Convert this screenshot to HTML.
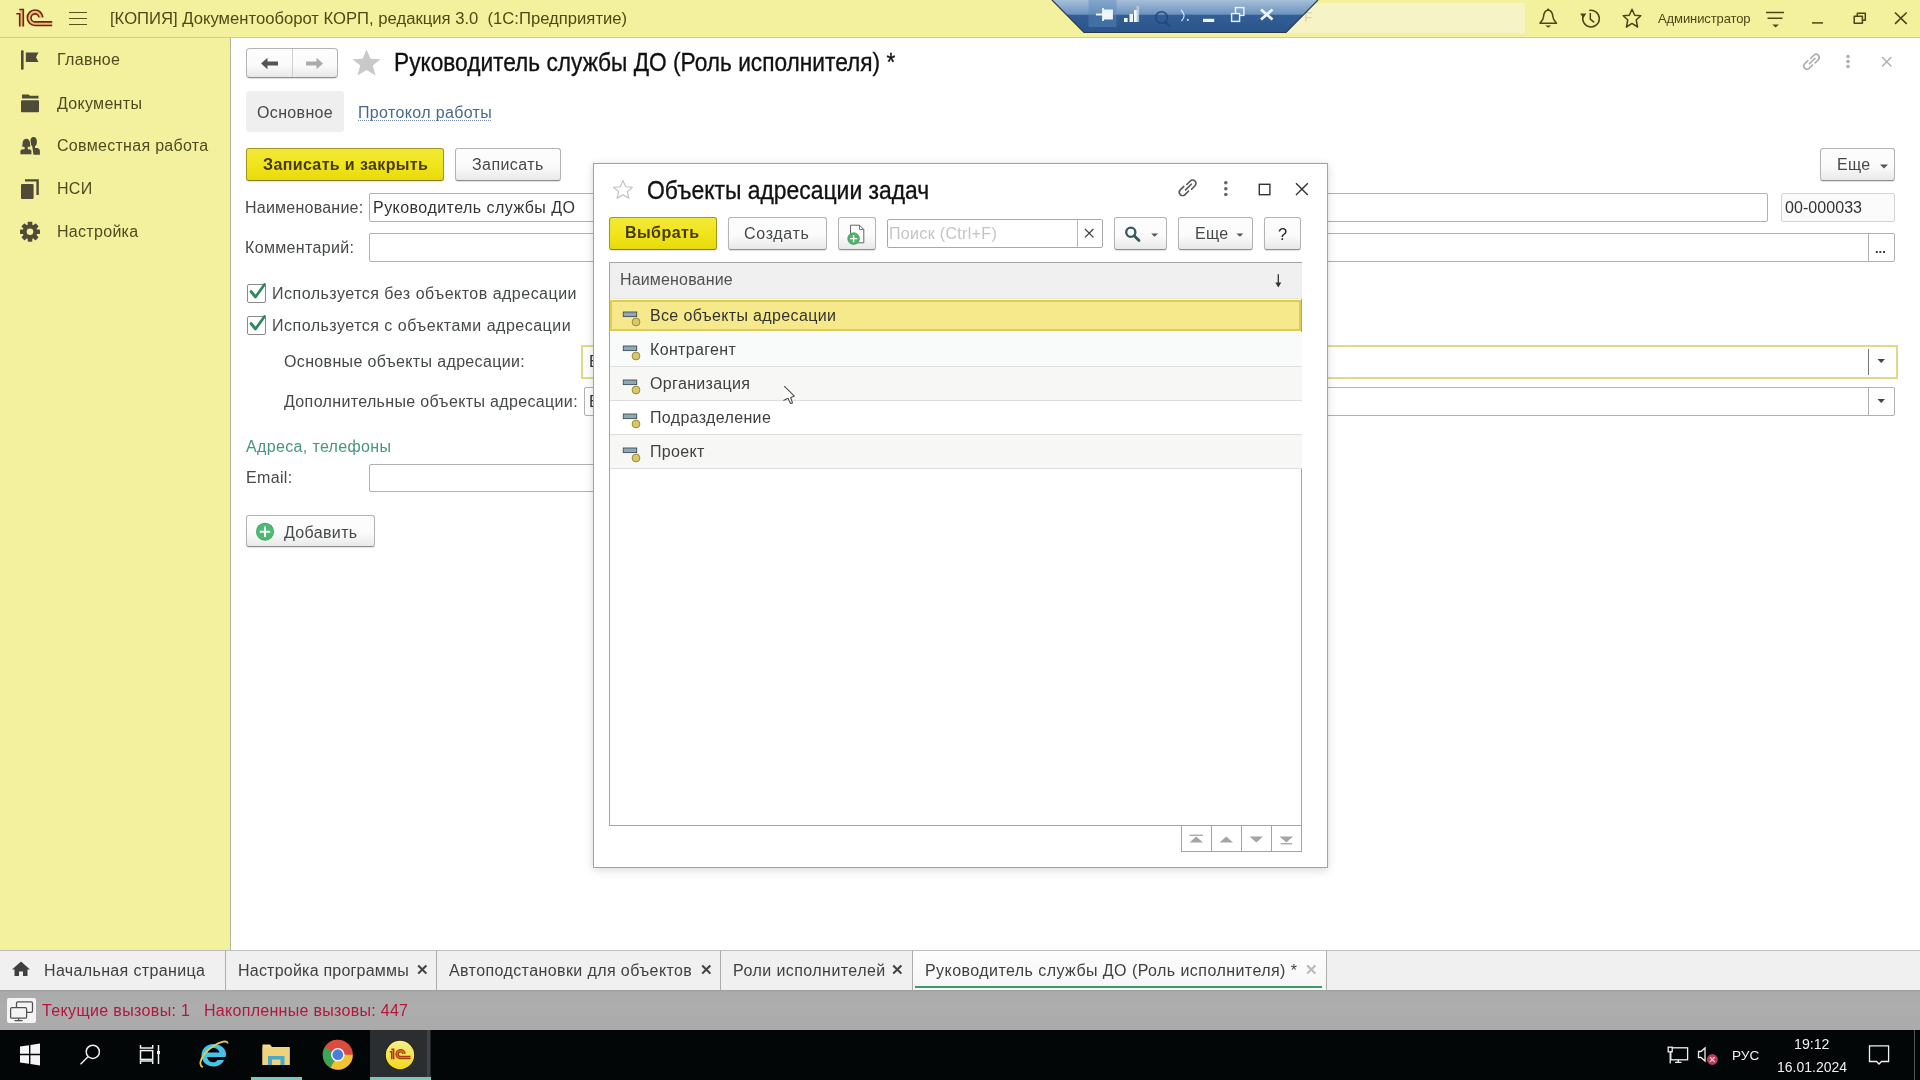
<!DOCTYPE html>
<html><head><meta charset="utf-8">
<style>
*{box-sizing:border-box}
html,body{margin:0;padding:0;width:1920px;height:1080px;overflow:hidden;background:#fff;font-family:"Liberation Sans",sans-serif;position:relative}
.a{position:absolute;white-space:nowrap;line-height:1;will-change:transform}
.b{position:absolute}
svg{position:absolute;overflow:visible}
#titlebar{position:absolute;left:0;top:0;width:1920px;height:38px;background:#f3f09e;border-bottom:1px solid #d3cd7e}
#side{position:absolute;left:0;top:38px;width:231px;height:912px;background:#f3f09e;border-right:1px solid #b4b29c}
.side-t{font-size:16px;color:#4e4b20;letter-spacing:0.3px}
.ft{font-size:16px;color:#464949;letter-spacing:0.35px;margin-top:1px}
.btn{position:absolute;border:1px solid #b4b4b4;border-bottom-color:#8e8e8e;border-radius:3px;background:linear-gradient(#fdfdfd,#fbfbfb 55%,#e9e9e9);box-shadow:0 1px 1px rgba(0,0,0,0.12)}
.ybtn{position:absolute;border:1px solid #a39620;border-bottom-color:#8c7f12;border-radius:3px;background:linear-gradient(#f2e838,#f1e51c 50%,#e7da0c);box-shadow:0 1px 1px rgba(0,0,0,0.12)}
.inp{position:absolute;border:1px solid #b0b0b0;border-radius:2px;background:#fff}
#tabs{position:absolute;left:0;top:950px;width:1920px;height:40px;background:#f0f0f0;border-top:1px solid #bdbdbd}
#status{position:absolute;left:0;top:990px;width:1920px;height:40px;background:linear-gradient(#9e9e9e,#aaaaaa 2px,#adadad 40%,#aaaaaa)}
#task{position:absolute;left:0;top:1030px;width:1920px;height:50px;background:#030606}
.tab-t{font-size:16px;color:#404040;letter-spacing:0.22px}
.st-t{font-size:16px;color:#b5163a;letter-spacing:0.36px}
</style></head><body>

<!-- TITLE BAR -->
<div id="titlebar"></div>
<!-- 1C logo -->
<svg style="left:0;top:0" width="60" height="32" viewBox="0 0 60 32">
  <rect x="19.7" y="9.5" width="3.6" height="17.1" fill="#f4b487"/>
  <path d="M27.25 17.75 A7.75 7.75 0 0 1 42.75 17.75 L39 17.75 A4 4 0 0 0 31 17.75 A4 4 0 0 0 35 21.9 H52.2 V25.5 H35 A7.75 7.75 0 0 1 27.25 17.75 Z" fill="#f4b487"/>
  <path d="M16.3 13.8 H19.7 V26.6 M19.3 9.5 H23.3 V26.6" fill="none" stroke="#6b2a06" stroke-width="1.6"/>
  <path d="M42.8 17.4 A7.75 7.75 0 1 0 35 25.5 H52.2" fill="none" stroke="#6b2a06" stroke-width="1.6"/>
  <path d="M39 17.4 A4 4 0 1 0 35 21.9 H52.2" fill="none" stroke="#6b2a06" stroke-width="1.6"/>
</svg>
<!-- hamburger -->
<div class="b" style="left:69px;top:11.7px;width:18px;height:1.6px;background:#57531c"></div>
<div class="b" style="left:69px;top:17.6px;width:18px;height:1.6px;background:#57531c"></div>
<div class="b" style="left:69px;top:23.6px;width:18px;height:1.6px;background:#57531c"></div>
<div class="a" style="left:110px;top:10.8px;font-size:16.65px;color:#4f4b16">[КОПИЯ] Документооборот КОРП, редакция 3.0&nbsp; (1С:Предприятие)</div>

<!-- search field behind remote toolbar -->
<div class="b" style="left:1280px;top:3px;width:245px;height:30px;background:#f6f3c6"></div>
<div class="a" style="left:1304px;top:10px;font-size:14px;color:#d8d4b0">F</div>
<!-- remote desktop toolbar -->
<svg style="left:0;top:0" width="1920" height="40" viewBox="0 0 1920 40">
  <defs>
    <linearGradient id="rdg" x1="0" y1="0" x2="0" y2="1">
      <stop offset="0" stop-color="#a6bfd8"/>
      <stop offset="0.44" stop-color="#6d93bf"/>
      <stop offset="0.46" stop-color="#325f95"/>
      <stop offset="1" stop-color="#2a548b"/>
    </linearGradient>
  </defs>
  <path d="M1052 0 L1084 32.5 L1286 32.5 L1318 0 Z" fill="url(#rdg)"/>
  <path d="M1052 0 L1084 32.5 L1286 32.5 L1318 0" fill="none" stroke="#2b3a4a" stroke-width="1.2"/>
  <rect x="1088.5" y="0" width="28" height="27" fill="#5a8abb" opacity="0.45"/>
  <!-- pin -->
  <path d="M1096 14.5 H1103 M1103 8 V21 M1104 10.5 H1112 V18.5 H1104 Z" fill="#eef6fb" stroke="#eef6fb" stroke-width="1.8"/>
  <!-- signal -->
  <rect x="1124" y="18" width="3.6" height="4" fill="#f2f7fa"/>
  <rect x="1129.5" y="14" width="3.6" height="8" fill="#f2f7fa"/>
  <rect x="1134" y="10" width="3.6" height="12" fill="#f2f7fa"/>
  <rect x="1136.5" y="6" width="2.6" height="16" fill="#c0d2e2" opacity="0.8"/>
  <!-- magnifier -->
  <circle cx="1161.5" cy="17.5" r="5.8" fill="none" stroke="#1f4a7e" stroke-width="1.5"/>
  <path d="M1165.5 22 L1170 26.5" stroke="#1f4a7e" stroke-width="2.2"/>
  <!-- ). -->
  <path d="M1181 10 Q1187 15.5 1181.5 21" fill="none" stroke="#e6eef5" stroke-width="1.1"/>
  <rect x="1187" y="19" width="1.6" height="1.8" fill="#e6eef5"/>
  <!-- minimize -->
  <rect x="1203" y="18.8" width="11.2" height="3.2" fill="#eef6fb"/>
  <!-- restore -->
  <rect x="1235.5" y="7.6" width="8.4" height="7.8" fill="none" stroke="#eef6fb" stroke-width="1.4"/>
  <rect x="1231.6" y="13.6" width="8" height="7.8" fill="#3a6aa0" stroke="#eef6fb" stroke-width="1.4"/>
  <!-- close -->
  <path d="M1261 9.5 L1272.5 19.5 M1272.5 9.5 L1261 19.5" stroke="#eef6fb" stroke-width="2.8"/>
</svg>
<!-- right title icons -->
<svg style="left:0;top:0" width="1920" height="40" viewBox="0 0 1920 40">
  <g fill="none" stroke="#4a4618" stroke-width="1.5" stroke-linejoin="round">
    <path d="M1548.2 10 C1544 10.5 1543.8 14 1543.5 17 C1543.2 20 1541 22 1540 23.2 H1556.5 C1555.5 22 1553.2 20 1552.9 17 C1552.6 14 1552.4 10.5 1548.2 10 Z"/>
    <path d="M1589.3 10.5 A8.3 8.3 0 1 1 1583.3 15.6"/>
    <path d="M1590.3 13 V19.2 L1594.2 22.3"/>
    <path d="M1632 9.3 L1634.7 15.3 L1640.8 15.8 L1636.2 20 L1637.6 27 L1632 23.4 L1626.4 27 L1627.8 20 L1623.2 15.8 L1629.3 15.3 Z"/>
    <path d="M1766 12.4 H1784 M1767.5 18.3 H1782.5"/>
    <path d="M1812 22.9 H1823"/>
    <rect x="1854.2" y="16.3" width="8.2" height="7"/>
    <path d="M1857.3 16.3 V13.3 H1865.3 V20.3 H1862.4"/>
    <path d="M1895 12.5 L1906.7 23.8 M1906.7 12.5 L1895 23.8" stroke-width="1.6"/>
  </g>
  <path d="M1545.3 25.4 H1551.2 L1548.2 27.8 Z" fill="#4a4618"/>
  <circle cx="1548.2" cy="9.6" r="1.1" fill="#4a4618"/>
  <path d="M1580.2 13.4 L1586.4 13.6 L1583.2 18.2 Z" fill="#4a4618"/>
  <path d="M1772.3 24.4 H1778.9 L1775.6 27.6 Z" fill="#4a4618"/>
</svg>
<div class="a" style="left:1657.8px;top:12px;font-size:13px;color:#4a4618;letter-spacing:-0.1px">Администратор</div>

<!-- SIDEBAR -->
<div id="side"></div>
<svg style="left:0;top:0" width="60" height="260" viewBox="0 0 60 260">
  <g fill="#504a38">
    <rect x="21" y="50.3" width="2.6" height="19.5" rx="1"/>
    <path d="M25.8 52.6 H38.5 L36 57.3 L38.5 62 H25.8 Z"/>
    <path d="M22 94.4 H28.5 L30 95.8 H38.5 V98.5 H22 Z"/>
    <rect x="21" y="100.2" width="18" height="12" rx="1"/>
    <!-- people -->
    <ellipse cx="33.6" cy="141.8" rx="3.3" ry="4.8"/>
    <path d="M32 145 H35 V148 H37.4 Q39.9 148.4 39.9 151 V154.8 H33.5 Z"/>
    <path d="M21.8 147.2 C22 143 22.2 138.4 26.3 138.4 C30.4 138.4 30.6 143 30.8 147.2 H28.2 V148.9 H29.6 Q31.9 148.9 31.9 151.2 V154.8 H20 V151.2 Q20 148.9 22.4 148.9 H24.2 V147.2 Z" stroke="#f3f09e" stroke-width="0.9"/>
    <!-- pages -->
    <path d="M25 179.2 H38.8 V195 H36.4 V181.6 H25 Z"/>
    <rect x="21" y="184" width="12.6" height="15" rx="1"/>
  </g>
  <!-- gear -->
  <g transform="translate(30 231.8)">
    <g fill="#504a38">
      <rect x="-2.3" y="-10" width="4.6" height="20" rx="0.8"/>
      <rect x="-2.3" y="-10" width="4.6" height="20" rx="0.8" transform="rotate(45)"/>
      <rect x="-2.3" y="-10" width="4.6" height="20" rx="0.8" transform="rotate(90)"/>
      <rect x="-2.3" y="-10" width="4.6" height="20" rx="0.8" transform="rotate(135)"/>
      <circle r="7.3"/>
    </g>
    <circle r="3.3" fill="#f3f09e"/>
  </g>
</svg>
<div class="a side-t" style="left:57px;top:52.3px">Главное</div>
<div class="a side-t" style="left:57px;top:95.5px">Документы</div>
<div class="a side-t" style="left:57px;top:138px">Совместная работа</div>
<div class="a side-t" style="left:57px;top:181.3px">НСИ</div>
<div class="a side-t" style="left:57px;top:223.7px">Настройка</div>

<!-- MAIN FORM -->
<div class="btn" style="left:246px;top:48px;width:92px;height:30px;border-radius:4px"></div>
<div class="b" style="left:292px;top:49px;width:1px;height:28px;background:#d0d0d0"></div>
<svg style="left:0;top:0" width="400" height="90" viewBox="0 0 400 90">
  <path d="M261 63.5 L267.5 57.7 V61.5 H278 V65.5 H267.5 V69.3 Z" fill="#555"/>
  <path d="M323 63.5 L316.5 57.7 V61.5 H306 V65.5 H316.5 V69.3 Z" fill="#aaa"/>
  <path d="M366.5 49.5 L370.5 58.8 L380.5 59.3 L372.8 65.6 L375.5 75.6 L366.5 70 L357.5 75.6 L360.2 65.6 L352.5 59.3 L362.5 58.8 Z" fill="#c9c9c9"/>
</svg>
<div class="a" style="left:393.5px;top:52.3px;font-size:22.7px;color:#111;-webkit-text-stroke:0.3px #111;transform:scaleY(1.115);transform-origin:0 19.26px">Руководитель службы ДО (Роль исполнителя) *</div>
<svg style="left:0;top:0" width="1920" height="90" viewBox="0 0 1920 90">
  <g fill="none" stroke="#aaa" stroke-width="1.6" stroke-linecap="round">
    <path d="M1810.5 58.5 L1814 55 A3.2 3.2 0 0 1 1818.5 59.5 L1815 63"/>
    <path d="M1812.5 65 L1809 68.5 A3.2 3.2 0 0 1 1804.5 64 L1808 60.5"/>
    <path d="M1809.5 63.8 L1815 58.3"/>
    <path d="M1882.5 57.5 L1891 66 M1891 57.5 L1882.5 66" stroke-width="1.3"/>
  </g>
  <g fill="#aaa"><circle cx="1848" cy="56.5" r="1.7"/><circle cx="1848" cy="61.5" r="1.7"/><circle cx="1848" cy="66.5" r="1.7"/></g>
</svg>
<div class="b" style="left:246px;top:91px;width:98px;height:41px;background:#efefef;border-radius:3px"></div>
<div class="a ft" style="left:257.3px;top:104.2px">Основное</div>
<div class="a ft" style="left:358px;top:104.2px;color:#48698c">Протокол работы</div>
<div class="b" style="left:358px;top:120px;width:133px;height:0;border-top:1px dotted #6f8aa8"></div>

<div class="ybtn" style="left:246px;top:148px;width:198px;height:32.5px"></div>
<div class="a ft" style="left:263px;top:155.9px;font-weight:bold;color:#463a08;letter-spacing:0.37px">Записать и закрыть</div>
<div class="btn" style="left:455px;top:148px;width:106px;height:32.5px"></div>
<div class="a ft" style="left:472.4px;top:155.5px;letter-spacing:0.42px">Записать</div>
<div class="btn" style="left:1820px;top:148px;width:75px;height:32.5px"></div>
<div class="a ft" style="left:1837.3px;top:156px">Еще</div>
<svg style="left:0;top:0" width="1920" height="420" viewBox="0 0 1920 420">
  <path d="M1880 164.5 H1888 L1884 168.5 Z" fill="#555"/>
</svg>

<div class="a ft" style="left:245px;top:198.5px;letter-spacing:0.23px">Наименование:</div>
<div class="inp" style="left:369px;top:193px;width:1399px;height:29px"></div>
<div class="a ft" style="left:373px;top:198.5px;color:#333;letter-spacing:0.46px">Руководитель службы ДО</div>
<div class="inp" style="left:1781px;top:193px;width:114px;height:29px;background:#fbfbfb;border-color:#d4d4d4"></div>
<div class="a ft" style="left:1785px;top:199px;color:#333;letter-spacing:0.06px">00-000033</div>

<div class="a ft" style="left:245px;top:239px">Комментарий:</div>
<div class="inp" style="left:369px;top:233px;width:1526px;height:29px"></div>
<div class="b" style="left:1868px;top:234px;width:1px;height:27px;background:#b0b0b0"></div>
<div class="a" style="left:1875px;top:242.2px;font-size:13px;color:#333;font-weight:bold">...</div>

<!-- checkboxes -->
<div class="inp" style="left:247px;top:284px;width:19px;height:19px;border-color:#8a8a8a;border-radius:2px"></div>
<div class="inp" style="left:247px;top:316px;width:19px;height:19px;border-color:#8a8a8a;border-radius:2px"></div>
<svg style="left:0;top:0" width="300" height="360" viewBox="0 0 300 360">
  <path d="M251 291.5 L255.5 297 L264.5 284.5" fill="none" stroke="#2e8a5c" stroke-width="2.8" stroke-linecap="round" stroke-linejoin="round"/>
  <path d="M251 323.5 L255.5 329 L264.5 316.5" fill="none" stroke="#2e8a5c" stroke-width="2.8" stroke-linecap="round" stroke-linejoin="round"/>
</svg>
<div class="a ft" style="left:272px;top:285.2px;letter-spacing:0.49px">Используется без объектов адресации</div>
<div class="a ft" style="left:272px;top:317.2px;letter-spacing:0.49px">Используется с объектами адресации</div>

<div class="a ft" style="left:284px;top:353.3px">Основные объекты адресации:</div>
<div class="b" style="left:581px;top:344.5px;width:1316.5px;height:34px;border:2px solid #dedb88;background:#fff"></div>
<div class="a ft" style="left:588.5px;top:353.3px;color:#333">В</div>
<div class="b" style="left:1868px;top:349px;width:1px;height:26px;background:#777"></div>
<div class="a ft" style="left:284px;top:393.1px">Дополнительные объекты адресации:</div>
<div class="inp" style="left:584px;top:387px;width:1311px;height:29px"></div>
<div class="a ft" style="left:588.5px;top:393.1px;color:#333">В</div>
<div class="b" style="left:1868px;top:388px;width:1px;height:27px;background:#b0b0b0"></div>
<svg style="left:0;top:0" width="1920" height="420" viewBox="0 0 1920 420">
  <path d="M1877.5 359 H1885 L1881.25 363 Z" fill="#444"/>
  <path d="M1877.5 399 H1885 L1881.25 403 Z" fill="#444"/>
</svg>

<div class="a ft" style="left:246px;top:438px;color:#46967a">Адреса, телефоны</div>
<div class="a ft" style="left:246.2px;top:468.8px">Email:</div>
<div class="inp" style="left:369px;top:463.5px;width:800px;height:28px"></div>

<div class="btn" style="left:245.8px;top:514.8px;width:129px;height:32.5px"></div>
<svg style="left:0;top:0" width="400" height="560" viewBox="0 0 400 560">
  <circle cx="265" cy="531.7" r="9" fill="#3aa560"/>
  <circle cx="265" cy="531.7" r="8.2" fill="#4cbb72"/>
  <path d="M265 526.5 V536.9 M259.8 531.7 H270.2" stroke="#fff" stroke-width="2"/>
</svg>
<div class="a ft" style="left:284px;top:524.3px">Добавить</div>

<!-- DIALOG -->
<div class="b" style="left:593px;top:163px;width:735px;height:705px;background:#fff;border:1px solid #a3a3a3;box-shadow:0 2px 9px rgba(0,0,0,0.15),0 0 3px rgba(0,0,0,0.06)"></div>
<svg style="left:0;top:0" width="1920" height="900" viewBox="0 0 1920 900">
  <path d="M623 180.6 L625.7 186.8 L632.4 187.3 L627.3 191.6 L628.9 198.3 L623 194.7 L617.1 198.3 L618.7 191.6 L613.6 187.3 L620.3 186.8 Z" fill="none" stroke="#bdbdbd" stroke-width="1.1" stroke-linejoin="round"/>
  <g fill="none" stroke="#555" stroke-width="1.6" stroke-linecap="round">
    <path d="M1186.8 184.5 L1190.3 181 A3.3 3.3 0 0 1 1195 185.7 L1191.5 189.2"/>
    <path d="M1188.6 191 L1185 194.6 A3.3 3.3 0 0 1 1180.3 189.9 L1183.8 186.4"/>
    <path d="M1185.6 189.9 L1191.3 184.2"/>
  </g>
  <g fill="#666"><circle cx="1225.8" cy="182.8" r="1.8"/><circle cx="1225.8" cy="188.8" r="1.8"/><circle cx="1225.8" cy="194.5" r="1.8"/></g>
  <rect x="1259.3" y="184.3" width="10.6" height="10.4" fill="none" stroke="#333" stroke-width="1.4"/>
  <path d="M1296 183.3 L1307.8 195 M1307.8 183.3 L1296 195" stroke="#333" stroke-width="1.4"/>
</svg>
<div class="a" style="left:646.8px;top:180px;font-size:22.9px;color:#111;-webkit-text-stroke:0.3px #111;transform:scaleY(1.12);transform-origin:0 19.38px">Объекты адресации задач</div>

<div class="ybtn" style="left:609px;top:217px;width:108px;height:33px"></div>
<div class="a ft" style="left:625px;top:224.3px;font-weight:bold;color:#463a08;letter-spacing:0.45px">Выбрать</div>
<div class="btn" style="left:728px;top:217px;width:98.5px;height:32.5px"></div>
<div class="a ft" style="left:744px;top:225.2px;letter-spacing:0.68px">Создать</div>
<div class="btn" style="left:838px;top:217px;width:37.5px;height:32.5px"></div>
<svg style="left:0;top:0" width="1920" height="300" viewBox="0 0 1920 300">
  <path d="M850.5 225.2 H859.5 L863.8 229.5 V242.8 H850.5 Z" fill="#fff" stroke="#666" stroke-width="1"/>
  <path d="M859.5 225.2 V229.5 H863.8" fill="none" stroke="#666" stroke-width="0.9"/>
  <circle cx="853.6" cy="238.6" r="5.8" fill="#52b46c" stroke="#3a9a58" stroke-width="0.8"/>
  <path d="M853.6 235 V242.2 M850 238.6 H857.2" stroke="#fff" stroke-width="1.4"/>
</svg>
<div class="inp" style="left:887px;top:219px;width:216px;height:28.5px;border-color:#a8a8a8"></div>
<div class="b" style="left:1076.5px;top:220px;width:1px;height:26.5px;background:#b8b8b8"></div>
<div class="a ft" style="left:889.3px;top:225.2px;color:#c4c4c4;letter-spacing:0.33px">Поиск (Ctrl+F)</div>
<svg style="left:0;top:0" width="1920" height="300" viewBox="0 0 1920 300">
  <path d="M1085 229 L1093.4 237.4 M1093.4 229 L1085 237.4" stroke="#444" stroke-width="1.3"/>
</svg>
<div class="btn" style="left:1114px;top:217px;width:52.5px;height:33px"></div>
<svg style="left:0;top:0" width="1920" height="300" viewBox="0 0 1920 300">
  <circle cx="1130.8" cy="232.2" r="4.6" fill="none" stroke="#2f5a5e" stroke-width="2.3"/>
  <path d="M1134.2 235.8 L1139 240.6" stroke="#2f5a5e" stroke-width="2.8" stroke-linecap="round"/>
</svg>
<div class="btn" style="left:1177.8px;top:217px;width:74.8px;height:33px"></div>
<div class="a ft" style="left:1194.5px;top:225.2px">Еще</div>
<div class="btn" style="left:1263.8px;top:217px;width:37.7px;height:33px"></div>
<div class="a ft" style="left:1278px;top:225.2px;color:#222;font-size:16.5px">?</div>
<svg style="left:0;top:0" width="1920" height="300" viewBox="0 0 1920 300">
  <path d="M1151.2 233.6 H1158 L1154.6 236.8 Z" fill="#555"/>
  <path d="M1236.5 233.6 H1243.3 L1239.9 236.8 Z" fill="#555"/>
</svg>

<!-- table -->
<div class="b" style="left:609px;top:262px;width:693px;height:564px;border:1px solid #a4a4a4;background:#fff"></div>
<div class="b" style="left:610px;top:263px;width:691.5px;height:35px;background:#f0f0f0"></div>
<div class="b" style="left:610px;top:298px;width:691.5px;height:1px;background:#e6e8d0"></div>
<div class="a ft" style="left:619.5px;top:271px;color:#505050;letter-spacing:0.16px">Наименование</div>
<svg style="left:0;top:0" width="1920" height="300" viewBox="0 0 1920 300">
  <path d="M1278.3 274.3 V286" stroke="#333" stroke-width="1.3"/>
  <path d="M1275.3 282.6 L1278.3 287.4 L1281.3 282.6 Z" fill="#333"/>
</svg>
<div class="b" style="left:610px;top:332px;width:691.5px;height:34px;background:#f9fafa"></div>
<div class="b" style="left:610px;top:366px;width:691.5px;height:34px;background:#f7f7f5;border-top:1px solid #dedede"></div>
<div class="b" style="left:610px;top:400px;width:691.5px;height:34px;background:#fff;border-top:1px solid #dedede"></div>
<div class="b" style="left:610px;top:434px;width:691.5px;height:34px;background:#f7f7f5;border-top:1px solid #dedede"></div>
<div class="b" style="left:610px;top:468px;width:691.5px;height:1px;background:#dedede"></div>
<div class="b" style="left:610px;top:300px;width:690.5px;height:31px;background:#f6e98b;border:2.5px solid #dccb58"></div>
<svg style="left:0;top:0" width="1920" height="500" viewBox="0 0 1920 500">
  <defs>
    <g id="ico">
      <rect x="623.3" y="-10" width="13.4" height="4.6" fill="#8ea8b6" stroke="#3f4f55" stroke-width="0.9"/>
      <circle cx="636" cy="0" r="3.9" fill="#d9c865" stroke="#8f8236" stroke-width="0.9"/>
    </g>
  </defs>
  <use href="#ico" y="322"/>
  <use href="#ico" y="356"/>
  <use href="#ico" y="390"/>
  <use href="#ico" y="424"/>
  <use href="#ico" y="458"/>
</svg>
<div class="a ft" style="left:650px;top:307px;color:#333">Все объекты адресации</div>
<div class="a ft" style="left:650px;top:341px;color:#404040">Контрагент</div>
<div class="a ft" style="left:650px;top:375px;color:#404040">Организация</div>
<div class="a ft" style="left:650px;top:409px;color:#404040">Подразделение</div>
<div class="a ft" style="left:650px;top:443px;color:#404040">Проект</div>

<!-- scroll buttons -->
<div class="b" style="left:1181px;top:826px;width:121px;height:26px;border:1px solid #a4a4a4;border-top:none;background:#fff"></div>
<div class="b" style="left:1211px;top:826px;width:1px;height:25px;background:#a4a4a4"></div>
<div class="b" style="left:1241px;top:826px;width:1px;height:25px;background:#a4a4a4"></div>
<div class="b" style="left:1271px;top:826px;width:1px;height:25px;background:#a4a4a4"></div>
<svg style="left:0;top:0" width="1920" height="900" viewBox="0 0 1920 900">
  <g fill="#a4a4a4">
    <rect x="1189.5" y="834.6" width="13.4" height="1.3"/>
    <path d="M1189.5 842.6 L1196.2 836.6 L1202.9 842.6 Z"/>
    <path d="M1219.6 842.6 L1226.3 836.6 L1233 842.6 Z"/>
    <path d="M1249.6 836.4 L1256.3 842.4 L1263 836.4 Z"/>
    <path d="M1279.6 836.4 L1286.3 842.4 L1293 836.4 Z"/>
    <rect x="1280.6" y="843.1" width="11.4" height="1.3"/>
  </g>
</svg>
<!-- cursor -->
<svg style="left:0;top:0" width="1920" height="900" viewBox="0 0 1920 900">
  <path d="M784.2 386.2 L794.4 396.1 L790.6 397.4 L792.5 402.9 L790.6 403.5 L788 398.3 L783.4 400.6 Z" fill="#fff"/>
  <path d="M784.2 386.2 L794.4 396.1 L790.6 397.4 L792.5 402.9 L790.6 403.5 L788 398.3 L783.4 400.6" fill="none" stroke="#4a4a4a" stroke-width="1.1" stroke-linejoin="round"/>
</svg>

<!-- TABS -->
<div id="tabs"></div>
<svg style="left:0;top:950px" width="40" height="40" viewBox="0 0 40 40">
  <path d="M21 11.5 L12 19.5 H14.5 V26 H19 V21.5 H23 V26 H27.5 V19.5 H30 Z" fill="#3f3f3f"/>
</svg>
<div class="a tab-t" style="left:43.5px;top:963px;letter-spacing:0.36px">Начальная страница</div>
<div class="b" style="left:225px;top:951px;width:1px;height:39px;background:#adadad"></div>
<div class="a tab-t" style="left:238px;top:963px">Настройка программы</div>
<div class="a" style="left:416px;top:962px;font-size:15px;color:#444;font-weight:bold">✕</div>
<div class="b" style="left:436px;top:951px;width:1px;height:39px;background:#adadad"></div>
<div class="a tab-t" style="left:449px;top:963px;letter-spacing:0.4px">Автоподстановки для объектов</div>
<div class="a" style="left:700px;top:962px;font-size:15px;color:#444;font-weight:bold">✕</div>
<div class="b" style="left:720px;top:951px;width:1px;height:39px;background:#adadad"></div>
<div class="a tab-t" style="left:733px;top:963px;letter-spacing:0.44px">Роли исполнителей</div>
<div class="a" style="left:891px;top:962px;font-size:15px;color:#444;font-weight:bold">✕</div>
<div class="b" style="left:912px;top:951px;width:1px;height:39px;background:#adadad"></div>
<div class="b" style="left:913px;top:951px;width:413px;height:39px;background:linear-gradient(#fdfdfd,#f6f6f6)"></div>
<div class="a tab-t" style="left:925px;top:963px;letter-spacing:0.44px">Руководитель службы ДО (Роль исполнителя) *</div>
<div class="a" style="left:1305px;top:962px;font-size:15px;color:#bbb;font-weight:bold">✕</div>
<div class="b" style="left:915px;top:985.8px;width:407px;height:2px;background:#3b9a6a"></div>
<div class="b" style="left:1326px;top:951px;width:1px;height:39px;background:#adadad"></div>

<!-- STATUS -->
<div id="status"></div>
<div class="b" style="left:7px;top:998px;width:28.5px;height:25px;background:#f4f4f4;border-radius:2px"></div>
<svg style="left:0;top:990px" width="40" height="40" viewBox="0 0 40 40">
  <g fill="#f4f4f4" stroke="#505050" stroke-width="1.25">
    <rect x="16.5" y="11.9" width="16" height="10.5" rx="1.3"/>
    <rect x="10.6" y="17.6" width="16" height="10.6" rx="1.3"/>
    <path d="M18.6 28.2 V30.5 M14.6 30.6 H22.6" fill="none"/>
  </g>
</svg>
<div class="a st-t" style="left:42px;top:1002.8px">Текущие вызовы: 1</div>
<div class="a st-t" style="left:204px;top:1002.8px;letter-spacing:0.29px">Накопленные вызовы: 447</div>

<!-- TASKBAR -->
<div id="task"></div>
<svg style="left:0;top:1030px" width="1920" height="50" viewBox="0 0 1920 50">
  <g fill="#f4f4f4">
    <path d="M20 16.5 L29 15.2 V23.8 H20 Z"/>
    <path d="M30.4 15 L40 13.6 V23.8 H30.4 Z"/>
    <path d="M20 25.2 H29 V33.8 L20 32.5 Z"/>
    <path d="M30.4 25.2 H40 V35.4 L30.4 34 Z"/>
  </g>
  <g fill="none" stroke="#f0f0f0" stroke-width="1.5">
    <circle cx="92.8" cy="21.8" r="6.6"/>
    <path d="M88 26.8 L80.5 34.3"/>
    <path d="M140.5 15 V18 H152.7 V15 M140.5 34 V31 H152.7 V34"/>
    <rect x="140.5" y="20.6" width="12.2" height="8.8"/>
    <path d="M158.5 15 V34"/>
  </g>
  <rect x="157" y="21" width="3" height="3" fill="#f0f0f0"/>
  <!-- IE -->
  <g>
    <path d="M213.5 14 C206 14 201.5 19.5 201.5 25 C201.5 31.5 206.5 36.5 213.5 36.5 C218.5 36.5 222.5 34 224 30 H217.5 C216.5 31.5 215 32.3 213.5 32.3 C210 32.3 207.5 30 207.2 27 H225.5 C225.8 26 226 25.3 226 24.5 C226 18.5 220.5 14 213.5 14 Z M207.5 22.5 C208 19.8 210.5 18 213.5 18 C216.5 18 219 19.8 219.5 22.5 Z" fill="#47c3e8"/>
    <path d="M203 37 C197 35 202 24 212 17 C221 11 228 10 227.5 13.5" fill="none" stroke="#e9c85a" stroke-width="1.8"/>
  </g>
  <!-- Explorer -->
  <g>
    <path d="M262.5 14.5 H270 L272 17 H289.6 V35 H262.5 Z" fill="#f2dc8c"/>
    <path d="M262.5 17.5 H289.6 V35 H262.5 Z" fill="#efd37a"/>
    <path d="M268 35 V26 H284.5 V35 H280.5 V29.5 H272 V35 Z" fill="#4aa8cc"/>
  </g>
  <rect x="251" y="47" width="51" height="3" fill="#79c9bb"/>
  <!-- Chrome -->
  <g transform="translate(337.8 24.7)">
    <circle r="15" fill="#dd4b3e"/>
    <path d="M0 0 L15 0 A15 15 0 0 1 -7.5 13 Z" fill="#f1c232"/>
    <path d="M0 0 L-7.5 13 A15 15 0 0 1 -13 -7.5 Z" fill="#3aa757"/>
    <path d="M0 0 L-13 -7.5 A15 15 0 0 1 0 -15 Z" fill="#dd4b3e"/>
    <circle r="6.8" fill="#fff"/>
    <circle r="5.4" fill="#4a7de2"/>
  </g>
  <!-- 1C active -->
  <rect x="370" y="0" width="56.5" height="50" fill="#2a2e31"/>
  <rect x="426.5" y="0" width="4" height="50" fill="#3e4346"/>
  <rect x="370" y="47" width="61" height="3" fill="#79c9bb"/>
  <defs><linearGradient id="g1c" x1="0" y1="0" x2="0" y2="1"><stop offset="0" stop-color="#f6f08a"/><stop offset="1" stop-color="#f0d81c"/></linearGradient></defs>
  <circle cx="400" cy="25" r="15" fill="#2a2200"/>
  <circle cx="400" cy="25" r="14.2" fill="url(#g1c)"/>
  <g transform="translate(380.2 13.8) scale(0.58)">
    <rect x="19.7" y="9.5" width="3.6" height="17.1" fill="#e88a3a"/>
    <path d="M27.25 17.75 A7.75 7.75 0 0 1 42.75 17.75 L39 17.75 A4 4 0 0 0 31 17.75 A4 4 0 0 0 35 21.9 H52.2 V25.5 H35 A7.75 7.75 0 0 1 27.25 17.75 Z" fill="#e88a3a"/>
    <path d="M16.3 13.8 H19.7 V26.6 M19.3 9.5 H23.3 V26.6" fill="none" stroke="#a83c08" stroke-width="2.4"/>
    <path d="M42.8 17.4 A7.75 7.75 0 1 0 35 25.5 H52.2" fill="none" stroke="#a83c08" stroke-width="2.4"/>
    <path d="M39 17.4 A4 4 0 1 0 35 21.9 H52.2" fill="none" stroke="#a83c08" stroke-width="2.4"/>
  </g>
  <!-- tray -->
  <g fill="none" stroke="#f0f0f0" stroke-width="1.3">
    <rect x="1670.8" y="17.8" width="16.8" height="12"/>
    <rect x="1668.2" y="17.2" width="4" height="4.6" fill="#030606"/>
    <path d="M1670.2 21.8 V33.5 M1675 32.3 H1681.5 M1678.3 29.8 V32.3"/>
    <path d="M1698.5 21.5 H1701 L1705 18 V31 L1701 27.5 H1698.5 Z"/>
    <path d="M1869.5 15.8 H1888.6 V31.5 H1881.5 L1879 34 L1876.5 31.5 H1869.5 Z"/>
  </g>
  <circle cx="1712.3" cy="29.5" r="5.4" fill="#b2415c"/>
  <path d="M1710 27.2 L1714.6 31.8 M1714.6 27.2 L1710 31.8" stroke="#f2d2da" stroke-width="1.2"/>
  <rect x="1914" y="0" width="1" height="50" fill="#555"/>
</svg>
<div class="a" style="left:1732px;top:1048.5px;font-size:13.6px;color:#f0f0f0">РУС</div>
<div class="a" style="left:1793.5px;top:1036.5px;font-size:14.2px;color:#f0f0f0">19:12</div>
<div class="a" style="left:1777px;top:1059.5px;font-size:14px;color:#f0f0f0">16.01.2024</div>

</body></html>
